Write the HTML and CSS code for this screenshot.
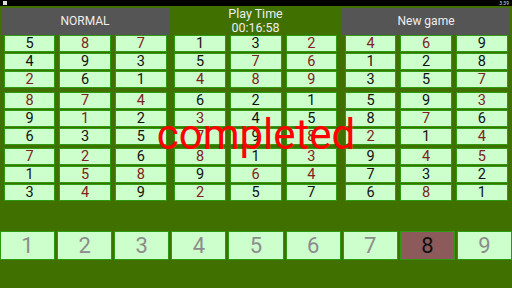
FILE: index.html
```html
<!DOCTYPE html>
<html lang="en">
<head>
<meta charset="utf-8"/>
<title>Sudoku</title>
<link rel="stylesheet" href="styles.css">
</head>
<body>
<div class="screen">
  <div class="status">
    <span class="status-icon"></span>
    <span class="status-time">3:39</span>
  </div>
  <div class="top">
    <div class="btn">NORMAL</div>
    <div class="timer">
      <div>Play Time</div>
      <div>00:16:58</div>
    </div>
    <div class="btn">New game</div>
  </div>
  <div class="board" id="board"></div>
  <div class="pad" id="pad"></div>
  <div class="completed">completed</div>
</div>
<script>
  // rows of the finished puzzle, "*" marks a number typed by the player
  const rows = [
    "5 8* 7* 1 3 2* 4* 6* 9",
    "4 9 3 5 7* 6* 1 2 8",
    "2* 6 1 4* 8* 9* 3 5 7*",
    "8* 7* 4* 6 2 1 5 9 3*",
    "9 1* 2 3* 4 5 8 7* 6",
    "6 3 5 7* 9 8* 2* 1 4*",
    "7* 2* 6 8* 1 3* 9 4* 5*",
    "1 5* 8* 9 6* 4* 7 3 2",
    "3 4* 9 2* 5 7 6 8* 1"
  ].map(r => r.split(" "));

  const board = document.getElementById("board");
  for (let b = 0; b < 9; b++) {
    const block = document.createElement("div");
    block.className = "block";
    const br = Math.floor(b / 3) * 3, bc = (b % 3) * 3;
    for (let i = 0; i < 9; i++) {
      const v = rows[br + Math.floor(i / 3)][bc + i % 3];
      const cell = document.createElement("div");
      cell.className = v.endsWith("*") ? "cell user" : "cell";
      cell.textContent = v.replace("*", "");
      block.appendChild(cell);
    }
    board.appendChild(block);
  }

  const pad = document.getElementById("pad");
  for (let n = 1; n <= 9; n++) {
    const key = document.createElement("div");
    key.className = n === 8 ? "key selected" : "key";
    key.textContent = n;
    pad.appendChild(key);
  }
</script>
</body>
</html>
```
FILE: styles.css
```css
body {
    margin: 0;
    background-color: #407000;
    font-family: Roboto, "Liberation Sans", sans-serif;
}
.screen {
    position: relative;
    width: 512px;
    height: 288px;
    overflow: hidden;
}
.status {
    height: 6px;
    background-color: #000;
    display: flex;
    justify-content: space-between;
    align-items: center;
    padding: 0 3px;
}
.status-icon {
    width: 4px;
    height: 4px;
    background-color: #ddd;
}
.status-time {
    color: #ddd;
    font-size: 5px;
    line-height: 6px;
}
.top {
    display: grid;
    grid-template-columns: 168px 173px 168px;
    margin: 2px 0 0 1px;
    height: 25px;
}
.btn {
    background-color: #555;
    color: #eee;
    font-size: 12px;
    display: flex;
    align-items: center;
    justify-content: center;
}
.timer {
    color: #eee;
    font-size: 12.5px;
    line-height: 14px;
    text-align: center;
    margin-top: -1.5px;
}
.board {
    display: grid;
    grid-template-columns: repeat(3, 163px);
    column-gap: 7.5px;
    row-gap: 3.5px;
    margin: 2px 0 0 3.7px;
}
.block {
    display: grid;
    grid-template-columns: repeat(3, 1fr);
    grid-auto-rows: 17px;
    column-gap: 4px;
    row-gap: 1px;
}
.cell {
    box-sizing: border-box;
    background-color: #ccffcc;
    border: 1px solid #2e9a10;
    color: #111;
    font-size: 14.5px;
    line-height: 16px;
    text-align: center;
}
.cell.user {
    color: #7e2222;
}
.pad {
    display: grid;
    grid-template-columns: repeat(9, 1fr);
    column-gap: 2px;
    margin-top: 30px;
}
.key {
    box-sizing: border-box;
    height: 29px;
    background-color: #ccffcc;
    border: 1px solid #2e9a10;
    color: #8c8c8c;
    font-size: 22px;
    line-height: 27px;
    text-align: center;
}
.key.selected {
    background-color: #8c5a5a;
    color: #111;
}
.completed {
    position: absolute;
    left: 0;
    right: 0;
    top: 114px;
    color: #ff0000;
    font-size: 42px;
    line-height: 42px;
    text-align: center;
}
```
